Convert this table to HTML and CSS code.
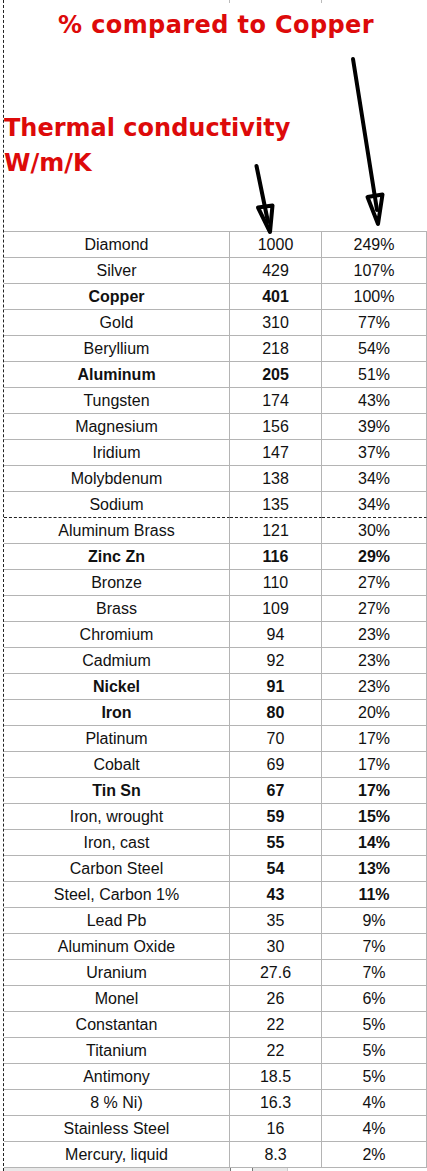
FILE: index.html
```html
<!DOCTYPE html>
<html>
<head>
<meta charset="utf-8">
<link rel="stylesheet" href="styles.css">
</head>
<body>
<div class="sheet">
  <div class="header">
    <h1 class="title">% compared to Copper</h1>
    <div class="label">Thermal conductivity<br>W/m/K</div>
    <svg class="arrows" width="427" height="240" viewBox="0 0 427 240">
      <line x1="229.5" y1="0" x2="229.5" y2="3" stroke="#bbb" stroke-width="1"/>
      <line x1="321.5" y1="0" x2="321.5" y2="3" stroke="#bbb" stroke-width="1"/>
      <line x1="353" y1="59" x2="377" y2="210" stroke="#000" stroke-width="4" stroke-linecap="round"/>
      <polygon points="367.5,197 382.5,194.5 378,224" fill="none" stroke="#000" stroke-width="4" stroke-linejoin="round"/>
      <line x1="256.5" y1="166" x2="268" y2="222" stroke="#000" stroke-width="4" stroke-linecap="round"/>
      <polygon points="258,207.5 272.5,205.5 270,232" fill="none" stroke="#000" stroke-width="4" stroke-linejoin="round"/>
    </svg>
  </div>
  <table class="grid">
    <colgroup><col class="c1"><col class="c2"><col class="c3"></colgroup>
    <tbody>
      <tr><td>Diamond</td><td>1000</td><td>249%</td></tr>
      <tr><td>Silver</td><td>429</td><td>107%</td></tr>
      <tr><td class="b">Copper</td><td class="b">401</td><td>100%</td></tr>
      <tr><td>Gold</td><td>310</td><td>77%</td></tr>
      <tr><td>Beryllium</td><td>218</td><td>54%</td></tr>
      <tr><td class="b">Aluminum</td><td class="b">205</td><td>51%</td></tr>
      <tr><td>Tungsten</td><td>174</td><td>43%</td></tr>
      <tr><td>Magnesium</td><td>156</td><td>39%</td></tr>
      <tr><td>Iridium</td><td>147</td><td>37%</td></tr>
      <tr><td>Molybdenum</td><td>138</td><td>34%</td></tr>
      <tr class="dash"><td>Sodium</td><td>135</td><td>34%</td></tr>
      <tr><td>Aluminum Brass</td><td>121</td><td>30%</td></tr>
      <tr><td class="b">Zinc Zn</td><td class="b">116</td><td class="b">29%</td></tr>
      <tr><td>Bronze</td><td>110</td><td>27%</td></tr>
      <tr><td>Brass</td><td>109</td><td>27%</td></tr>
      <tr><td>Chromium</td><td>94</td><td>23%</td></tr>
      <tr><td>Cadmium</td><td>92</td><td>23%</td></tr>
      <tr><td class="b">Nickel</td><td class="b">91</td><td>23%</td></tr>
      <tr><td class="b">Iron</td><td class="b">80</td><td>20%</td></tr>
      <tr><td>Platinum</td><td>70</td><td>17%</td></tr>
      <tr><td>Cobalt</td><td>69</td><td>17%</td></tr>
      <tr><td class="b">Tin Sn</td><td class="b">67</td><td class="b">17%</td></tr>
      <tr><td>Iron, wrought</td><td class="b">59</td><td class="b">15%</td></tr>
      <tr><td>Iron, cast</td><td class="b">55</td><td class="b">14%</td></tr>
      <tr><td>Carbon Steel</td><td class="b">54</td><td class="b">13%</td></tr>
      <tr><td>Steel, Carbon 1%</td><td class="b">43</td><td class="b">11%</td></tr>
      <tr><td>Lead Pb</td><td>35</td><td>9%</td></tr>
      <tr><td>Aluminum Oxide</td><td>30</td><td>7%</td></tr>
      <tr><td>Uranium</td><td>27.6</td><td>7%</td></tr>
      <tr><td>Monel</td><td>26</td><td>6%</td></tr>
      <tr><td>Constantan</td><td>22</td><td>5%</td></tr>
      <tr><td>Titanium</td><td>22</td><td>5%</td></tr>
      <tr><td>Antimony</td><td>18.5</td><td>5%</td></tr>
      <tr><td>8 % Ni)</td><td>16.3</td><td>4%</td></tr>
      <tr><td>Stainless Steel</td><td>16</td><td>4%</td></tr>
      <tr><td>Mercury, liquid</td><td>8.3</td><td>2%</td></tr>
    </tbody>
  </table>
  <div class="strip">
    <div class="strip-a"></div>
    <div class="strip-box"></div>
    <div class="strip-b"></div>
    <div class="strip-c"></div>
  </div>
</div>
</body>
</html>
```

FILE: styles.css
```css
html, body {
  margin: 0;
  padding: 0;
  background: #fff;
}
.sheet {
  margin-left: 3px;
  width: 424px;
  height: 1171px;
  border-left: 1px dashed #222;
  overflow: hidden;
}
.header {
  position: relative;
  height: 231px;
}
.title {
  margin: 0;
  padding-top: 10px;
  font-family: "DejaVu Sans", Verdana, sans-serif;
  font-weight: bold;
  font-size: 24px;
  letter-spacing: 0.4px;
  line-height: 30px;
  color: #dd0a0a;
  text-align: center;
}
.label {
  margin-top: 71px;
  font-family: "DejaVu Sans", Verdana, sans-serif;
  font-weight: bold;
  font-size: 24px;
  line-height: 35px;
  color: #dd0a0a;
}
.arrows {
  position: absolute;
  top: 0;
  left: -4px;
  pointer-events: none;
}
.grid {
  border-collapse: separate;
  border-spacing: 0;
  border-top: 1px solid #b4b4b4;
  table-layout: fixed;
  width: 423px;
  font-family: "Liberation Sans", Arial, sans-serif;
  font-size: 16px;
  color: #111;
}
.c1 { width: 226px; }
.c2 { width: 92px; }
.c3 { width: 105px; }
.grid td {
  height: 25px;
  padding: 0;
  line-height: 25px;
  text-align: center;
  white-space: nowrap;
  border-right: 1px solid #b4b4b4;
  border-bottom: 1px solid #b4b4b4;
}
.grid td.b {
  font-weight: bold;
}
.grid tr.dash td {
  border-bottom: 1px dashed #222;
}
.strip {
  display: flex;
  height: 4px;
}
.strip-a {
  width: 226px;
  background: #e8e8e8;
}
.strip-box {
  width: 21px;
  background: #fff;
  border-left: 1px solid #777;
  border-right: 1px solid #777;
}
.strip-b {
  width: 34px;
  background: #e8e8e8;
}
.strip-c {
  flex: 1;
  background: #fff;
  border-left: 1px solid #ccc;
}
```
